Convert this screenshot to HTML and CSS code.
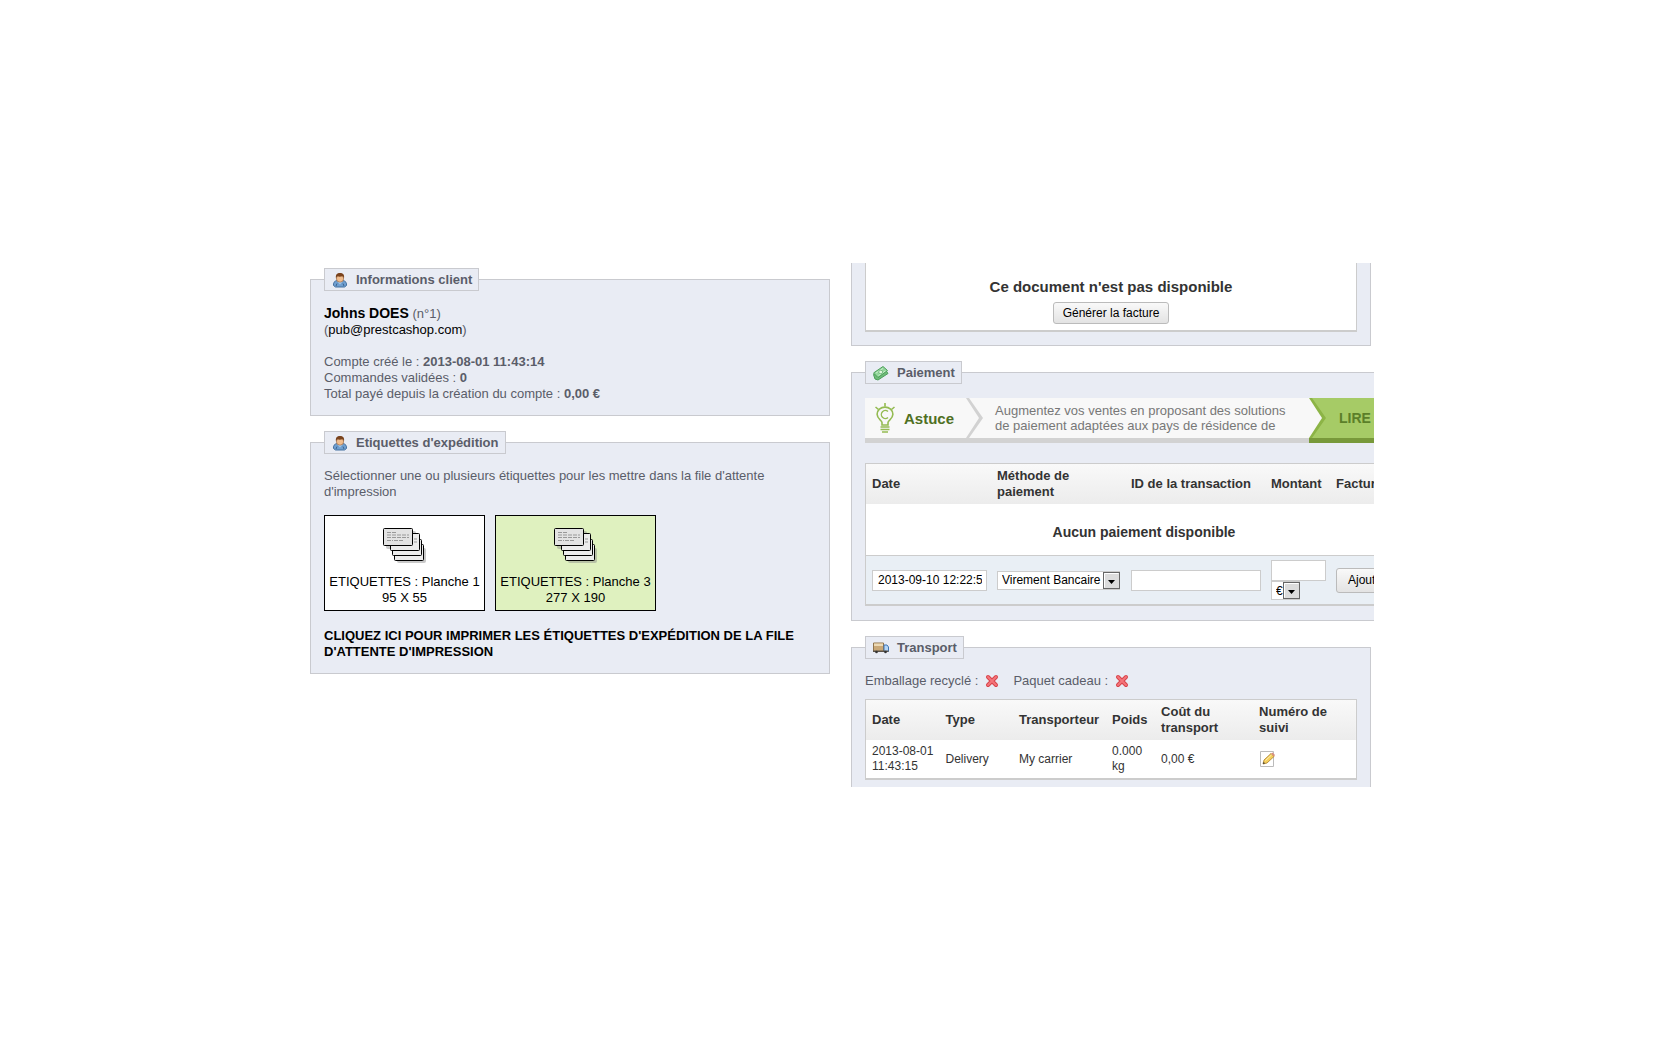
FILE: index.html
```
<!DOCTYPE html>
<html lang="fr">
<head>
    <meta charset="UTF-8">
    <meta name="viewport" content="width=device-width, initial-scale=1.0">
    <title>Commande</title>
    <link rel="stylesheet" href="styles.css">
</head>
<body>
    <!-- Shared icons -->
    <svg class="defs" width="0" height="0" aria-hidden="true">
        <symbol id="customer" viewBox="0 0 16 16">
            <path d="M1.500 13.500c-.5-2.500.8-4.500 3.500-5h6c2.700.5 4 2.500 3.500 5l-2 1.500h-9z" fill="#6f9fd0" stroke="#44709f"/>
            <path d="M5 9l3 3.500L11 9z" fill="#a9c8e6"/>
            <path d="M4 14l1-2.500M12 14l-1-2.500" stroke="#3c648f" fill="none"/>
            <rect x="4.500" y="3" width="7" height="7" rx="3" fill="#f0bd8e" stroke="#9b6a45" stroke-width=".7"/>
            <path d="M4 6.500C3.300 2.500 5 1 8 1s4.700 1.500 4 5.500c-.6-1.500-1-2-1.500-2.200-2 .5-4 .4-5 0C5 4.700 4.500 5.200 4 6.500z" fill="#7a431d"/>
        </symbol>
        <symbol id="cards" viewBox="0 0 44 36">
            <g fill="#8a8a8a" opacity=".45">
                <rect x="14" y="20" width="29" height="15" rx="2"/>
                <rect x="3" y="3" width="30" height="18" rx="2"/>
            </g>
            <g fill="#ececec" stroke="#000">
                <rect x="11.500" y="16.500" width="29" height="16" rx="1"/>
                <rect x="9.500" y="11.500" width="29" height="16" rx="1"/>
                <rect x="7.500" y="5.500" width="29" height="17" rx="1"/>
                <rect x=".5" y=".5" width="29" height="17" rx="1" fill="#e3e3e3"/>
            </g>
            <path d="M4 4.500h9M4 7h22M4 9.500h22M4 12.500h6m1 0h9M31 11h3M31 14h3" stroke="#999" stroke-dasharray="4 1" fill="none"/>
        </symbol>
        <symbol id="cross" viewBox="0 0 16 16">
            <path d="M4 4l8 8m0-8l-8 8" stroke="#d8434a" stroke-width="4" stroke-linecap="round"/>
            <path d="M4 4l8 8m0-8l-8 8" stroke="#f4757a" stroke-width="2" stroke-linecap="round"/>
        </symbol>
        <symbol id="arrow" viewBox="0 0 17 17">
            <rect x=".5" y=".5" width="16" height="16" fill="#dcdcdc" stroke="#666"/>
            <path d="M1.500 15.500v-14h14" stroke="#fff" fill="none"/>
            <path d="M5 8h7l-3.500 4z" fill="#000"/>
        </symbol>
    </svg>

    <div class="order">
        <div class="column left">
            <fieldset class="panel">
                <legend><svg class="icon"><use href="#customer"/></svg>Informations client</legend>
                <div class="customer">
                    <a href="#" class="name">Johns DOES</a> (n°1)<br>
                    (<a href="#">pub@prestcashop.com</a>)
                </div>
                <p>Compte créé le : <b>2013-08-01 11:43:14</b><br>
                Commandes validées : <b>0</b><br>
                Total payé depuis la création du compte : <b>0,00 €</b></p>
            </fieldset>

            <fieldset class="panel">
                <legend><svg class="icon"><use href="#customer"/></svg>Etiquettes d'expédition</legend>
                <p>Sélectionner une ou plusieurs étiquettes pour les mettre dans la file d'attente d'impression</p>
                <div class="labels">
                    <button type="button" class="label-card">
                        <svg class="cards"><use href="#cards"/></svg>
                        ETIQUETTES : Planche 1<br>95 X 55
                    </button>
                    <button type="button" class="label-card selected">
                        <svg class="cards"><use href="#cards"/></svg>
                        ETIQUETTES : Planche 3<br>277 X 190
                    </button>
                </div>
                <a href="#" class="print">CLIQUEZ ICI POUR IMPRIMER LES ÉTIQUETTES D'EXPÉDITION DE LA FILE D'ATTENTE D'IMPRESSION</a>
            </fieldset>
        </div>

        <div class="column right">
            <section class="panel documents">
                <div class="document-box">
                    <h3>Ce document n'est pas disponible</h3>
                    <button type="button" class="button">Générer la facture</button>
                </div>
            </section>

            <fieldset class="panel payment">
                <legend>
                    <svg class="icon" viewBox="0 0 16 16">
                        <path d="M.5 9.500l3-1 8.500-4.500 3 4.500-10 6.500-3-1z" fill="#6fbb79" stroke="#4c9e5a"/>
                        <path d="M.5 8l9.500-6.500 4.500 4-9.500 7z" fill="#93d69b" stroke="#4c9e5a"/>
                        <path d="M3 8l7-4.600M5.500 10.500l7-4.600" stroke="#c9efcb" fill="none"/>
                        <ellipse cx="7.700" cy="7" rx="2" ry="1.700" fill="#e2f7e0" stroke="#4c9e5a" stroke-width=".6"/>
                    </svg>Paiement
                </legend>
                <div class="tip">
                    <div class="tip-title">
                        <svg class="bulb" viewBox="0 0 20 30">
                            <g fill="none" stroke="#94bb52" stroke-width="1.600">
                                <path d="M7 22v-2.500c0-2-4.900-3.500-4.900-8.200a7.900 7.200 0 0 1 15.800 0c0 4.700-4.900 6.200-4.900 8.200V22z"/>
                                <path d="M13 8.500a4 4 0 1 0 0 6" stroke-width="1.400"/>
                                <path d="M10 0v3.500M.5 4l3 2.500M19.500 4l-3 2.500"/>
                                <path d="M5.500 24h9M5.500 26.500h9M7 29h6"/>
                            </g>
                        </svg>
                        Astuce
                    </div>
                    <svg class="chevron" viewBox="0 0 17 40"><path d="M0 0h3l14 20L3 40H0l13-20z" fill="#d2d2d2"/></svg>
                    <p>Augmentez vos ventes en proposant des solutions<br>de paiement adaptées aux pays de résidence de</p>
                    <a href="#" class="tip-more">
                        <svg viewBox="0 0 17 45"><path d="M0 0h3l14 20L3 40H0l12-20z" fill="#8cb446"/><path d="M0 0l13 20L0 40z" fill="#f8f8f8"/></svg>
                        LIRE
                    </a>
                </div>

                <table class="table payments">
                    <thead>
                        <tr>
                            <th class="date">Date</th>
                            <th class="method">Méthode de paiement</th>
                            <th class="transaction">ID de la transaction</th>
                            <th class="amount">Montant</th>
                            <th>Facture</th>
                        </tr>
                    </thead>
                    <tbody>
                        <tr class="empty"><td colspan="5">Aucun paiement disponible</td></tr>
                        <tr class="add">
                            <td><input type="text" value="2013-09-10 12:22:51" aria-label="Date"></td>
                            <td>
                                <span class="select">
                                    <select aria-label="Méthode de paiement"><option>Virement Bancaire</option></select>
                                    <svg><use href="#arrow"/></svg>
                                </span>
                            </td>
                            <td><input type="text" aria-label="ID de la transaction"></td>
                            <td>
                                <input type="text" aria-label="Montant">
                                <span class="select currency">
                                    <select aria-label="Devise"><option>€</option></select>
                                    <svg><use href="#arrow"/></svg>
                                </span>
                            </td>
                            <td><button type="button" class="button large">Ajouter</button></td>
                        </tr>
                    </tbody>
                </table>
            </fieldset>

            <fieldset class="panel transport">
                <legend>
                    <svg class="icon" viewBox="0 0 16 16">
                        <path d="M.5 3h10v8.500H.5z" fill="#c9a877" stroke="#8f744d"/>
                        <path d="M1 3.500h9v2.500H1z" fill="#ecd9b4"/>
                        <path d="M11 5h3l1.500 2v4.500H11z" fill="#b5d6f6" stroke="#3f75b5"/>
                        <path d="M0 10.500h15.500v1.500H0z" fill="#5b5348"/>
                        <circle cx="3.500" cy="12" r="1.300" fill="#333"/>
                        <circle cx="12.500" cy="12" r="1.300" fill="#333"/>
                    </svg>Transport
                </legend>
                <div class="options">
                    <span>Emballage recyclé : <svg class="icon"><use href="#cross"/></svg></span>
                    <span>Paquet cadeau : <svg class="icon"><use href="#cross"/></svg></span>
                </div>
                <table class="table shipping">
                    <thead>
                        <tr>
                            <th class="date">Date</th>
                            <th class="type">Type</th>
                            <th class="carrier">Transporteur</th>
                            <th class="weight">Poids</th>
                            <th class="cost">Coût du transport</th>
                            <th>Numéro de suivi</th>
                        </tr>
                    </thead>
                    <tbody>
                        <tr>
                            <td>2013-08-01 11:43:15</td>
                            <td>Delivery</td>
                            <td>My carrier</td>
                            <td>0.000 kg</td>
                            <td>0,00 €</td>
                            <td>
                                <a href="#" aria-label="Modifier">
                                    <svg class="icon" viewBox="0 0 16 16">
                                        <path d="M1.500.5h13v15h-13z" fill="#fff" stroke="#bbb"/>
                                        <path d="M4 13l1-4 7-6.500 3 3L8 12z" fill="#f6cf5b" stroke="#a97f2a" stroke-width=".8"/>
                                        <path d="M6.500 9.500l6-5.500" stroke="#fdf0b5"/>
                                        <path d="M12 2.500l1.500-1 2.500 2.500-1 1.500z" fill="#d98d7c"/>
                                        <path d="M4 13l.6-2 1.500 1.300z" fill="#333"/>
                                    </svg>
                                </a>
                            </td>
                        </tr>
                    </tbody>
                </table>
            </fieldset>
        </div>
    </div>
</body>
</html>
```
FILE: styles.css
```
* {
    box-sizing: border-box;
}

body {
    display: flex;
    justify-content: center;
    align-items: center;
    min-height: 100vh;
    margin: 0;
    background: #fff;
    color: #5a5d69;
    font-family: "Liberation Sans", Arial, sans-serif;
    font-size: 13px;
    line-height: 16px;
}

a {
    color: #000;
    text-decoration: none;
}

p {
    margin: 0;
}

.defs {
    position: absolute;
}

.icon {
    width: 16px;
    height: 16px;
}

.order {
    display: grid;
    grid-template-columns: minmax(0, 1fr) minmax(0, 1fr);
    gap: 21px;
    width: 100%;
    max-width: 1068px;
    max-height: 524px;
    padding: 0 3px 0 4px;
    overflow: hidden;
}

.column {
    display: flex;
    flex-direction: column;
    gap: 15px;
}

.left {
    padding-top: 5px;
}

/* Panels */
.panel {
    margin: 0;
    padding: 14px 13px 13px;
    border: 1px solid #c9cacf;
    background: #e9ecf4;
}

.panel legend {
    display: flex;
    align-items: center;
    gap: 8px;
    height: 23px;
    padding: 0 6px 0 7px;
    border: 1px solid #c9cacf;
    background: #e9ecf4;
    font-weight: bold;
}

.customer {
    margin-bottom: 16px;
}

.name {
    font-size: 14px;
    font-weight: bold;
}

/* Shipping labels */
.labels {
    display: flex;
    gap: 10px;
    margin: 15px 0 17px;
}

.label-card {
    width: 161px;
    padding: 12px 0 4px;
    border: 1px solid #000;
    background: #fff;
    color: #000;
    font: inherit;
    white-space: nowrap;
}

.label-card.selected {
    background: #dff1bf;
}

.cards {
    display: block;
    width: 44px;
    height: 36px;
    margin: 0 auto 10px;
}

.print {
    font-weight: bold;
}

/* Documents */
.panel.documents {
    padding-top: 0;
    border-top: 0;
}

.document-box {
    display: flex;
    flex-direction: column;
    align-items: center;
    gap: 7px;
    padding: 16px 0 6px;
    border: 1px solid #ccc;
    border-top: 0;
    border-bottom-width: 2px;
    background: #fff;
}

h3 {
    margin: 0;
    color: #333;
    font-size: 15px;
}

.button {
    height: 22px;
    padding: 0 9px;
    border: 1px solid #bbb;
    border-radius: 3px;
    background: linear-gradient(#f9f9f9, #e3e3e3);
    color: #000;
    font-family: inherit;
    font-size: 12px;
}

.button.large {
    height: 25px;
    padding: 0 11px;
}

/* Payment */
.panel.payment {
    min-width: 584px;
    padding-bottom: 14px;
}

.tip {
    display: flex;
    align-items: center;
    height: 45px;
    margin-bottom: 20px;
    border-bottom: 5px solid #d2d2d2;
    background: #f8f8f8;
    color: #777;
    line-height: 15px;
}

.tip-title {
    display: flex;
    align-items: center;
    gap: 9px;
    width: 101px;
    padding-left: 10px;
    color: #4f7023;
    font-size: 15px;
    font-weight: bold;
}

.bulb {
    width: 20px;
    height: 30px;
}

.chevron {
    width: 17px;
    height: 40px;
}

.tip p {
    flex: 1;
    padding-left: 12px;
    white-space: nowrap;
}

.tip-more {
    display: flex;
    align-items: center;
    align-self: flex-start;
    gap: 13px;
    width: 112px;
    height: 45px;
    border-bottom: 5px solid #78993a;
    background: #a6cb66;
    color: #5b7f29;
    font-size: 14px;
    font-weight: bold;
}

.tip-more svg {
    align-self: flex-start;
    width: 17px;
    height: 45px;
}

/* Tables */
.table {
    width: 100%;
    border: 1px solid #ccc;
    border-bottom-width: 2px;
    border-spacing: 0;
    table-layout: fixed;
    background: #fff;
    color: #333;
    font-size: 12px;
    line-height: 15px;
}

.table thead {
    background: linear-gradient(#f9f9f9, #ececec);
}

.table th {
    height: 40px;
    padding: 0 4px 0 6px;
    font-size: 13px;
    line-height: 16px;
    text-align: left;
}

.table td {
    height: 38px;
    padding: 0 4px 0 6px;
}

.table td .icon {
    display: block;
}

.payments .date {
    width: 125px;
}

.payments .method {
    width: 134px;
}

.payments .transaction {
    width: 140px;
}

.payments .amount {
    width: 65px;
}

.payments .empty td {
    height: 52px;
    padding-top: 6px;
    border-bottom: 1px solid #ccc;
    font-size: 14px;
    font-weight: bold;
    text-align: center;
}

.payments .add td {
    height: 48px;
    background: #e9eff5;
}

.table input {
    display: block;
    width: 100%;
    height: 21px;
    padding: 0 4px 0 5px;
    border: 1px solid #ccc;
    background: #fff;
    color: #000;
    font-family: inherit;
    font-size: 12px;
}

.select {
    display: block;
    position: relative;
    width: 123px;
    height: 19px;
}

.select select {
    width: 100%;
    height: 19px;
    padding: 0 4px;
    border: 1px solid #ccc;
    border-radius: 0;
    appearance: none;
    background: #fff;
    color: #000;
    font-family: inherit;
    font-size: 12px;
}

.select svg {
    position: absolute;
    top: 1px;
    right: 0;
    width: 17px;
    height: 17px;
    pointer-events: none;
}

.select.currency {
    width: 29px;
}

/* Transport */
.options {
    display: flex;
    gap: 13px;
    margin-bottom: 10px;
}

.options span {
    display: flex;
    align-items: center;
    gap: 6px;
}

.shipping .date,
.shipping .type {
    width: 15%;
}

.shipping .carrier {
    width: 19%;
}

.shipping .weight {
    width: 10%;
}

.shipping .cost {
    width: 20%;
}
```
